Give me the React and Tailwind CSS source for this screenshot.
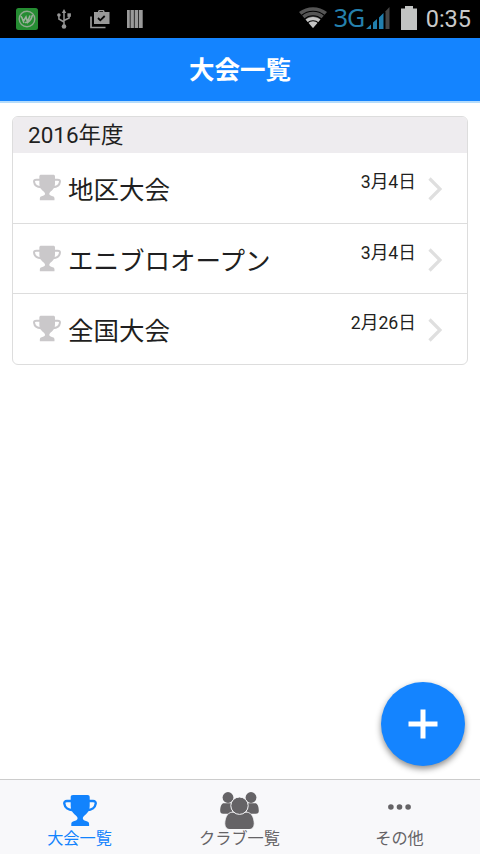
const tournaments = [
  { name: "地区大会", date: "3月4日" },
  { name: "エニブロオープン", date: "3月4日" },
  { name: "全国大会", date: "2月26日" },
];

/* ── ICONS ── */
function TrophyIcon({ className }) {
  return (
    <svg viewBox="0 0 34 31" className={className} fill="currentColor">
      <path d="M10 0h14.500c1.500 0 2.200.8 2.200 2.200V11c0 3.600-1.400 6-3.700 8.200-1.600 1.400-3.200 2.400-3.200 4 0 1.700 1.700 2.500 4 3 1.600.4 2.300 1.200 2.300 2.700V31H8.300v-2.100c0-1.500.7-2.300 2.300-2.700 2.300-.5 4-1.300 4-3 0-1.600-1.600-2.600-3.200-4C9.100 17 7.700 14.600 7.700 11V2.200C7.700.8 8.500 0 10 0Z" />
      <path
        d="M8.500 6H4C2 6 1.100 7 1.300 8.700c.4 3.600 3.900 6.300 8.700 6.500M25.500 6H30c2 0 2.900 1 2.700 2.700-.4 3.600-3.900 6.300-8.700 6.500"
        fill="none"
        stroke="currentColor"
        strokeWidth="2.400"
      />
    </svg>
  );
}

function UsersIcon({ className }) {
  return (
    <svg viewBox="0 0 39 37" className={className} fill="currentColor">
      <circle cx="8" cy="5.500" r="5.400" />
      <circle cx="31" cy="5.500" r="5.400" />
      <path d="M3.200 11.200h9.300v9.300c-1 .1-2 .6-2.800 1.300H3.200C1 21.800.2 20.700.2 18.800c0-3.200.7-6.600 3-7.600ZM35.800 11.200h-9.300v9.300c1 .1 2 .6 2.800 1.300h6.500c2.200 0 3-1.100 3-3 0-3.200-.7-6.600-3-7.600Z" />
      <path
        d="M12 20.200h15c5.200.5 7.200 6.600 7.200 11.600 0 3.400-2.100 5.800-5.400 5.800H10.200c-3.300 0-5.400-2.400-5.400-5.800 0-5 2-11.100 7.200-11.600Z"
        stroke="#f8f8fa"
        strokeWidth=".8"
      />
      <circle cx="19.500" cy="13.700" r="8.700" stroke="#f8f8fa" strokeWidth="1" />
    </svg>
  );
}

function MoreIcon({ className }) {
  return (
    <svg viewBox="0 0 23 6" className={className} fill="currentColor">
      <circle cx="2.900" cy="3" r="2.800" />
      <circle cx="11.500" cy="3" r="2.800" />
      <circle cx="20.100" cy="3" r="2.800" />
    </svg>
  );
}

function ChevronIcon({ className }) {
  return (
    <svg viewBox="0 0 14 24" className={className} fill="none" stroke="currentColor" strokeWidth="3.200">
      <path d="M1.500 1.500 12 12 1.500 22.500" />
    </svg>
  );
}

/* ── ANDROID STATUS BAR ── */
function StatusBar() {
  return (
    <div className="flex h-[38px] shrink-0 items-center bg-black pl-4 pr-[9px]">
      <svg viewBox="0 0 22 22" className="h-[22px] w-[22px]">
        <rect width="22" height="22" rx="2.500" fill="#258c32" />
        <circle cx="11" cy="11" r="7.800" fill="none" stroke="#90a990" strokeWidth="1.400" />
        <path d="m5 8 2.500 5L10 9l1.500 5L14 7.500M9 14.500c4 .5 6-2 7.500-7.500M6 10l2 5" fill="none" stroke="#9bb19b" strokeWidth="1.600" />
      </svg>
      <svg viewBox="0 0 14 20" className="ml-[19px] h-5 w-3.5" fill="none" stroke="#969696" strokeWidth="1.500">
        <path d="M7 3v14M7 13 1.900 10V7M7 11.500l5.100-2.500V6" />
        <path d="M7 0 4.800 4h4.400Z" fill="#969696" stroke="none" />
        <circle cx="7" cy="17.500" r="2.300" fill="#969696" stroke="none" />
        <circle cx="1.900" cy="6" r="1.800" fill="#969696" stroke="none" />
        <path d="M10.400 4.300h3.500v3.500h-3.500z" fill="#969696" stroke="none" />
      </svg>
      <svg viewBox="0 0 20 19" className="ml-[19px] h-[19px] w-5">
        <path d="M1 6.500v11h14.500" fill="none" stroke="#999" strokeWidth="1.700" />
        <path d="M4 2h4V1L9 0h4.500l1 1v1h5v12H4Zm5.500 0H13v-.8H9.500Z" fill="#999" fillRule="evenodd" />
        <path d="m8 8 2.300 2.300L14.700 6" fill="none" stroke="#050505" strokeWidth="1.800" />
      </svg>
      <svg viewBox="0 0 16 18" className="ml-[17px] h-[18px] w-4" fill="#9a9a9a">
        <path d="M0 0h2.800v18H0zM3.500 0h3.400v18H3.500zM7.600 0H11v18H7.600zM11.700 0h4v18h-4z" />
      </svg>

      <div className="ml-auto flex items-center">
        <svg viewBox="0 0 28 21" className="mt-[-3px] h-[21px] w-7">
          <path d="M14 21 0 5C8-1.500 20-1.500 28 5Z" fill="#555" />
          <path d="M14 21 6.600 12.500c4.200-3.500 10.600-3.500 14.800 0Z" fill="#c5c5c5" />
          <path d="M2.500 8.500c6.500-5.600 16.500-5.600 23 0M5.500 12c4.800-4.300 12.200-4.300 17 0M8.500 15.800c3.100-2.800 7.900-2.800 11 0" fill="none" stroke="#000" strokeWidth="1.100" />
        </svg>
        <span className="ml-[7px] mt-[-3px] w-[29px] font-['Noto_Sans','Noto_Sans_CJK_JP',sans-serif] text-[25px] leading-none tracking-[-1px] text-[#2580ad]">
          3G
        </span>
        <svg viewBox="0 0 24 22" className="ml-[3px] mt-[-2px] h-[22px] w-6" fill="#217fae">
          <path d="m0 22 5-4.500V22zM7 15.500l4-3.500v10H7zM13 10.500 17.500 6v16H13z" />
          <path d="m19.500 4.300 4-4.300v22h-4z" fill="#464646" />
        </svg>
        <svg viewBox="0 0 16 24" className="ml-[11px] mt-[-2px] h-6 w-4" fill="#c2c4c3">
          <path d="M4 0h8v2.500h4V24H0V2.500h4z" />
        </svg>
        <span className="ml-[9px] mt-[2px] font-[Roboto,sans-serif] text-[23.500px] leading-none text-[#c9c9c9]">0:35</span>
      </div>
    </div>
  );
}

function TournamentRow({ name, date }) {
  return (
    <li className="flex h-[70.500px] border-b border-[#dddddd] pl-5 pr-[25px] last:h-[69.500px] last:border-b-0">
      <TrophyIcon className="mt-[21px] h-[27px] w-7 shrink-0 text-[#cac8ca]" />
      <span className="ml-[7px] mt-[19px] text-[25.500px] leading-9 text-[#1f1f21]">{name}</span>
      <span className="ml-auto mt-[17px] text-[17.700px] leading-6 text-[#1f1f21]">{date}</span>
      <ChevronIcon className="ml-[12px] mt-[24px] h-6 w-3.5 shrink-0 text-[#dfdfdf]" />
    </li>
  );
}

/* ── BOTTOM TABS ── */
function TabBar() {
  return (
    <nav className="grid h-[75px] shrink-0 grid-cols-3 border-t border-[#cccccc] bg-[#f8f8fa] text-[16.200px] leading-5 text-[#656366]">
      <button className="flex flex-col items-center pr-[1px] text-[#1283fd]">
        <span className="flex h-[49px] items-end pb-[3px]">
          <TrophyIcon className="h-[31px] w-[34px]" />
        </span>
        大会一覧
      </button>
      <button className="flex flex-col items-center pr-[1px]">
        <span className="flex h-[49px] items-end">
          <UsersIcon className="h-[37px] w-[39px]" />
        </span>
        クラブ一覧
      </button>
      <button className="flex flex-col items-center pr-[1px]">
        <span className="flex h-[49px] items-end pb-[19px]">
          <MoreIcon className="h-[6px] w-[23px]" />
        </span>
        その他
      </button>
    </nav>
  );
}

export default function App() {
  return (
    <div
      lang="ja"
      className="flex h-screen w-full flex-col overflow-hidden bg-white font-[Roboto,'Noto_Sans_CJK_JP',sans-serif]"
    >
      <StatusBar />

      <header className="flex h-[65px] shrink-0 items-center justify-center border-b-2 border-[#b5dcfb] bg-[#1484ff] pt-[3px]">
        <h1 className="text-[25.500px] font-bold leading-none text-white">大会一覧</h1>
      </header>

      <main className="relative flex-1 px-3 pt-[13px]">
        <section className="overflow-hidden rounded-[6px] border border-[#dddddd] bg-white">
          <h2 className="h-[36px] bg-[#eeecef] pl-[15px] text-[22.500px] leading-[37px] text-[#1f1f21]">2016年度</h2>
          <ul>
            {tournaments.map((t) => (
              <TournamentRow key={t.name} {...t} />
            ))}
          </ul>
        </section>

        {/* Floating add button */}
        <button
          aria-label="追加"
          className="absolute bottom-[13px] right-[15px] flex h-[84px] w-[84px] items-center justify-center rounded-full bg-[#1484ff] shadow-[0_3px_6px_rgba(0,0,0,0.45)]"
        >
          <svg viewBox="0 0 30 30" className="h-[30px] w-[30px]" stroke="white" strokeWidth="5">
            <path d="M15 .5v29M.5 15h29" />
          </svg>
        </button>
      </main>

      <TabBar />
    </div>
  );
}
